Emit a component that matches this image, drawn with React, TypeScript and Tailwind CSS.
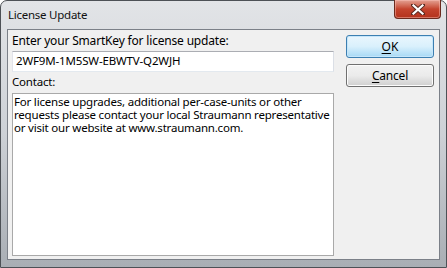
import React from "react";

const font = { fontFamily: '"Noto Sans", "Open Sans", Arial, sans-serif' };

function CloseGlyph() {
  return (
    <svg width="14" height="11" viewBox="0 0 14 11">
      <path d="M2 1 L12 10 M12 1 L2 10" stroke="#5a2a20" strokeWidth="4" strokeLinecap="square" />
      <path d="M2.5 1.5 L11.5 9.5 M11.5 1.5 L2.5 9.5" stroke="#ffffff" strokeWidth="2.2" strokeLinecap="square" />
    </svg>
  );
}

export default function App() {
  return (
    <div className="w-[447px] h-[268px] bg-white" style={font}>
      <div className="w-[447px] h-[268px] rounded-t-[7px] border border-[#4d5156] bg-gradient-to-b from-[#e2e4e7] via-[#cdd1d6] to-[#a9aeb4] flex flex-col px-[6px] pb-[7px] text-[12px] text-black">
        {/* title bar */}
        <div className="h-[28px] flex items-start relative">
          <div className="pl-[1px] pt-[6px] leading-[16px] text-[11.5px] tracking-[-0.25px] text-[#111]">License Update</div>
          <div className="absolute right-[-1px] top-[-1px] w-[47px] h-[19px] rounded-b-[4px] border border-t-0 border-[#6b2a1e] bg-gradient-to-b from-[#e3a193] via-[#c4432d] to-[#b3321c] flex items-center justify-center shadow-[inset_0_0_0_1px_rgba(255,200,190,0.45)]">
            <CloseGlyph />
          </div>
        </div>
        {/* client */}
        <div className="flex-1 border border-[#7b8088] bg-[#f0f0f0] flex pl-[4px] pt-[2px]">
          <div className="w-[322px] flex flex-col">
            <div className="leading-[16px] pt-[1px] tracking-[-0.18px]">Enter your SmartKey for license update:</div>
            <div className="mt-[2px] h-[21px] border border-[#abadb3] border-l-[#e2e3ea] border-r-[#dbdfe6] border-b-[#e3e9ef] bg-white flex items-center pl-[3px] leading-[16px] pb-[1px] text-[11.5px] tracking-[-0.15px]">
              2WF9M-1M5SW-EBWTV-Q2WJH
            </div>
            <div className="mt-[2px] leading-[16px] text-[11.5px] tracking-[-0.2px]">Contact:</div>
            <div className="mt-[3px] h-[163px] border border-[#a9a9a9] bg-white pl-[1px] pt-[1px] leading-[13px] whitespace-nowrap text-[11.5px] tracking-[-0.2px]">
              For license upgrades, additional per-case-units or other
              <br />
              requests please contact your local Straumann representative
              <br />
              or visit our website at www.straumann.com.
            </div>
          </div>
          <div className="ml-[12px] pt-[3px] flex flex-col gap-[6px]">
            <div className="w-[88px] h-[23px] rounded-[3px] border border-[#3c7fb1] bg-gradient-to-b from-[#eaf6fd] via-[#d9f0fc] to-[#a7d9f5] shadow-[inset_0_0_0_1px_#c6e6fa] flex items-center justify-center leading-[16px]">
              <span><span className="underline underline-offset-[2px]">O</span>K</span>
            </div>
            <div className="w-[88px] h-[23px] rounded-[3px] border border-[#707070] bg-gradient-to-b from-[#f2f2f2] via-[#ebebeb] to-[#cfcfcf] shadow-[inset_0_0_0_1px_#fcfcfc] flex items-center justify-center leading-[16px] tracking-[-0.2px]">
              <span><span className="underline underline-offset-[2px]">C</span>ancel</span>
            </div>
          </div>
        </div>
      </div>
    </div>
  );
}
